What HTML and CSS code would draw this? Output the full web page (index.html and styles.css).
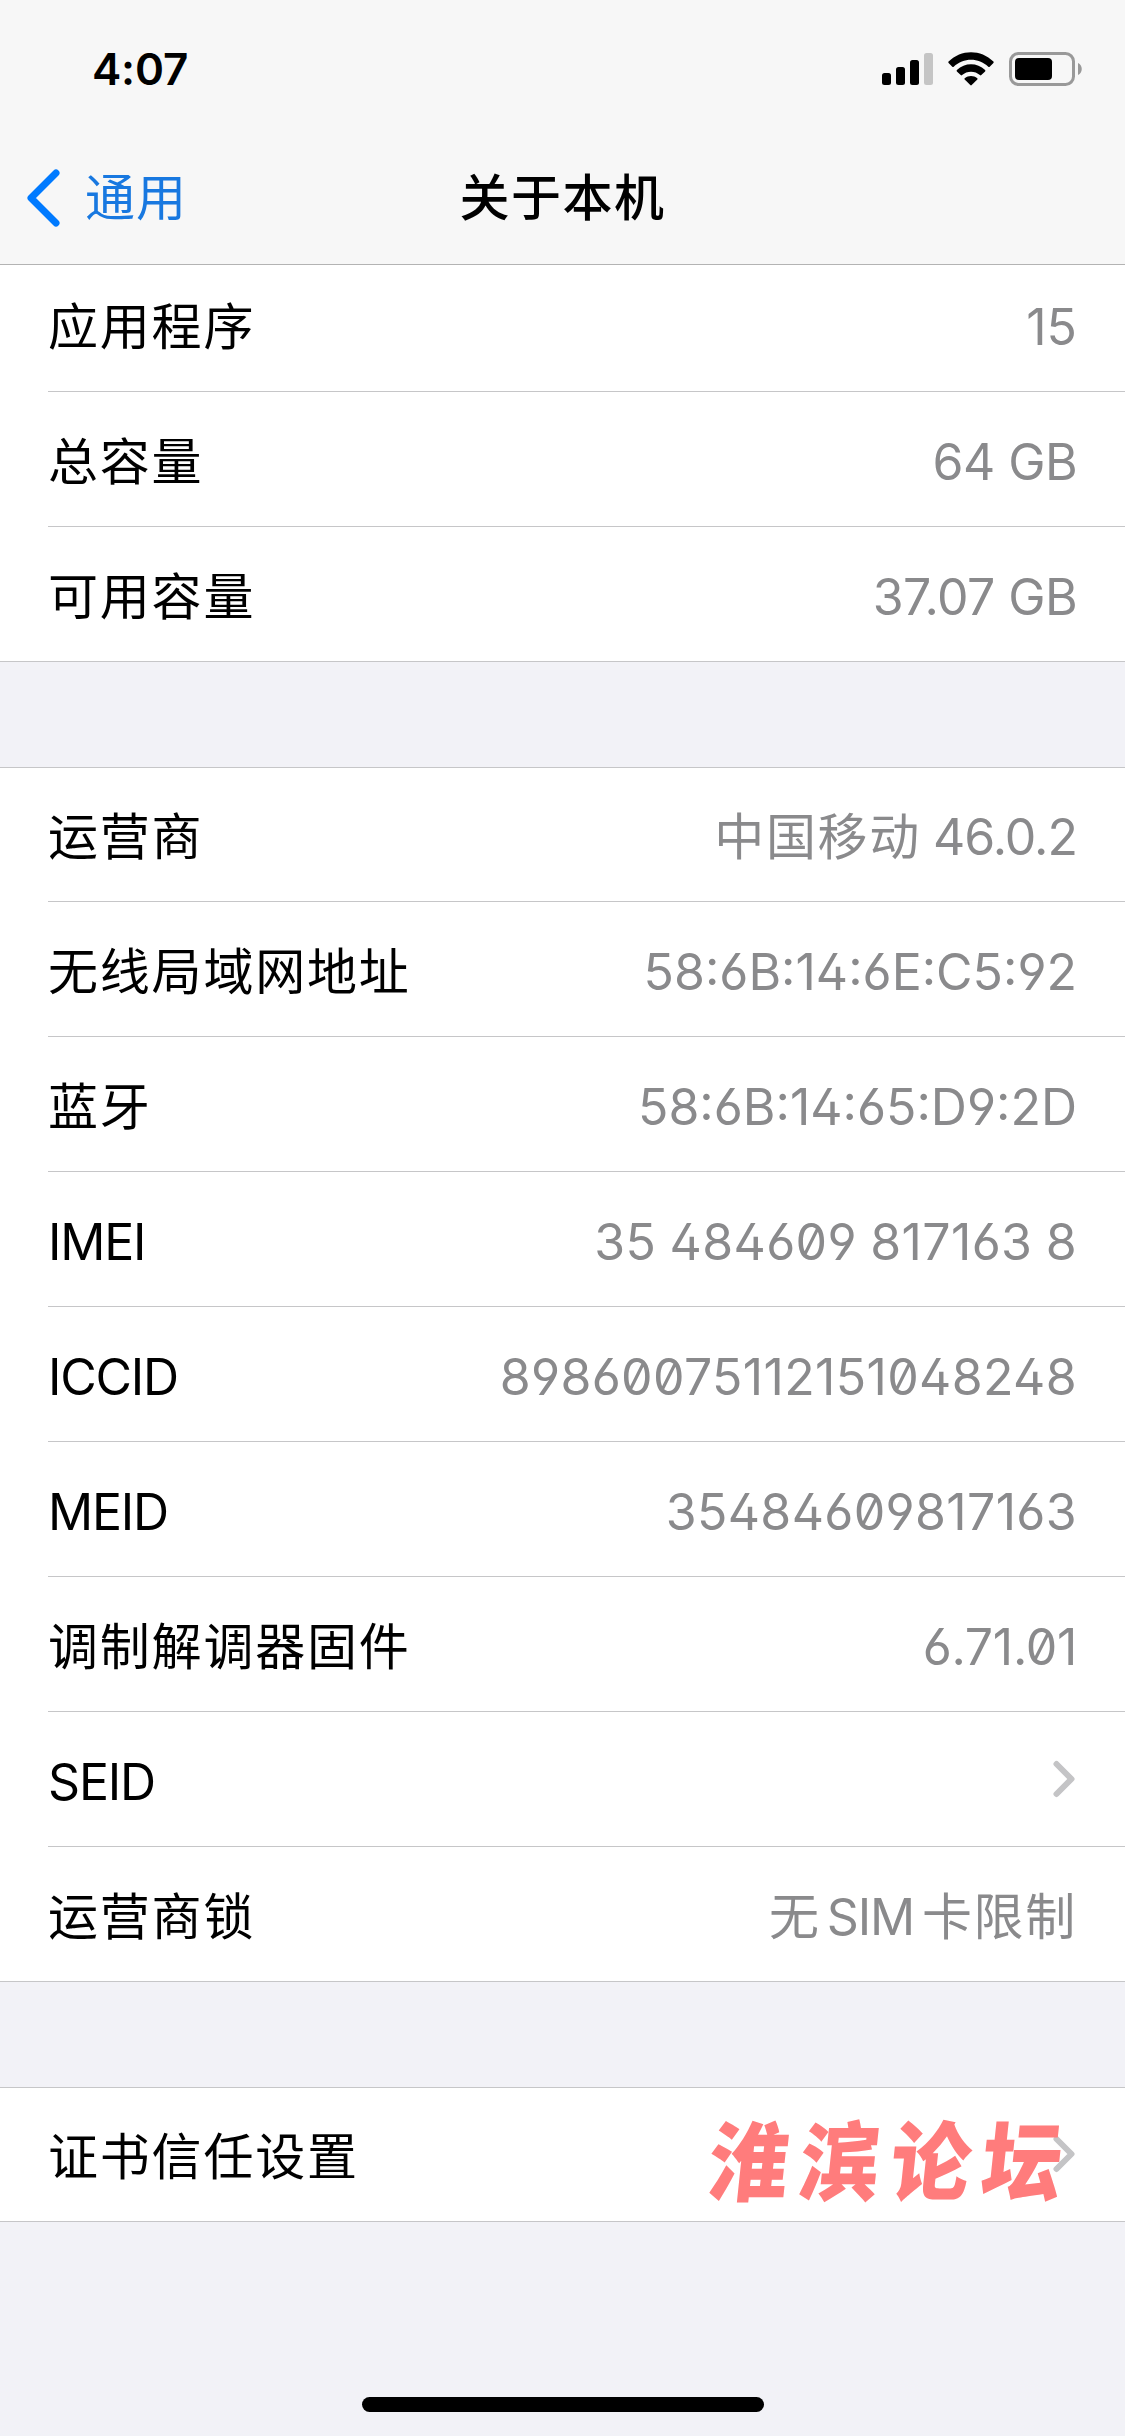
FILE: index.html
```html
<!DOCTYPE html>
<html lang="zh-CN">
<head>
  <meta charset="UTF-8" />
  <title>关于本机</title>
  <link rel="stylesheet" href="styles.css">
</head>
<body>

<header class="header">
  <div class="status-bar">
    <span class="time">4:07</span>
    <div class="status-icons">
      <svg class="signal" width="51" height="34" viewBox="0 0 51 34">
        <rect x="0" y="21" width="9" height="12" rx="2.5" />
        <rect x="14" y="15" width="9" height="18" rx="2.5" />
        <rect x="28" y="8" width="9" height="25" rx="2.5" />
        <rect x="42" y="1" width="9" height="32" rx="2.5" fill="#c5c5c5" />
      </svg>
      <svg class="wifi" width="46" height="34" viewBox="0 0 46 34">
        <path d="M0.6 9.6C13 -2.9 33 -2.9 45.4 9.6Q46 10.3 45.4 11L41.7 14.7Q41 15.3 40.3 14.7C30.5 5.4 15.5 5.4 5.7 14.7Q5 15.3 4.3 14.7L0.6 11Q0 10.3 0.6 9.6Z" />
        <path d="M8.9 18C16.8 10.3 29.2 10.3 37.1 18Q37.7 18.7 37.1 19.4L33.3 23.1Q32.6 23.7 31.9 23.1C27 18.6 19 18.6 14.1 23.1Q13.4 23.7 12.7 23.1L8.9 19.4Q8.3 18.7 8.9 18Z" />
        <path d="M16.7 26.2C20.3 23.2 25.7 23.2 29.3 26.2Q30 26.9 29.3 27.6L23.7 33.1Q23 33.7 22.3 33.1L16.7 27.6Q16 26.9 16.7 26.2Z" />
      </svg>
      <svg class="battery" width="74" height="35" viewBox="0 0 74 35">
        <rect x="1.5" y="1.5" width="63" height="31" rx="8" fill="none" stroke="#999" stroke-width="3" />
        <rect x="6" y="6" width="37" height="22" rx="4" />
        <path d="M69 11C74 13 74 21 69 23Z" fill="#999" />
      </svg>
    </div>
  </div>
  <nav class="nav">
    <div class="back">
      <svg width="34" height="58" viewBox="0 0 34 58"><path d="M30 4L5 29L30 54" fill="none" stroke="#007aff" stroke-width="7" stroke-linecap="round" stroke-linejoin="round" /></svg>
      <span>通用</span>
    </div>
    <h1 class="title">关于本机</h1>
  </nav>
</header>

<main>
  <ul class="group group-first">
    <li class="row"><span>应用程序</span><span class="value">15</span></li>
    <li class="row"><span>总容量</span><span class="value size">64 GB</span></li>
    <li class="row"><span>可用容量</span><span class="value size">37.07 GB</span></li>
  </ul>

  <ul class="group">
    <li class="row"><span>运营商</span><span class="value carrier"><span class="zh">中国移动</span> 46.0.2</span></li>
    <li class="row"><span>无线局域网地址</span><span class="value code mac">58:6B:14:6E:C5:92</span></li>
    <li class="row"><span>蓝牙</span><span class="value code mac">58:6B:14:65:D9:2D</span></li>
    <li class="row"><span class="en">IMEI</span><span class="value code imei">35 484609 817163 8</span></li>
    <li class="row"><span class="en">ICCID</span><span class="value code">89860075112151048248</span></li>
    <li class="row"><span class="en">MEID</span><span class="value code">35484609817163</span></li>
    <li class="row"><span>调制解调器固件</span><span class="value code firmware">6.71.01</span></li>
    <li class="row">
      <span class="en">SEID</span>
      <svg class="chevron" width="22" height="38" viewBox="0 0 22 38"><path d="M3.5 4L18.5 19L3.5 34" /></svg>
    </li>
    <li class="row"><span>运营商锁</span><span class="value"><span class="zh">无</span><span class="sim">SIM</span><span class="zh">卡限制</span></span></li>
  </ul>

  <ul class="group">
    <li class="row">
      <span>证书信任设置</span>
      <svg class="chevron" width="22" height="38" viewBox="0 0 22 38"><path d="M3.5 4L18.5 19L3.5 34" /></svg>
      <span class="watermark">淮滨论坛</span>
    </li>
  </ul>
</main>

<div class="home-indicator"></div>

</body>
</html>
```
FILE: styles.css
```css
* { box-sizing: border-box; }
body {
  margin: 0;
  width: 1125px;
  height: 2436px;
  overflow: hidden;
  display: flex;
  flex-direction: column;
  background-color: #f2f2f7;
  color: #000;
  font-family: Inter, "Noto Sans CJK SC", sans-serif;
  font-size: 50px;
}
svg { display: block; }

/* status bar and navigation */
.header {
  height: 265px;
  flex: none;
  background-color: #f7f7f7;
  border-bottom: 1px solid #b3b3b3;
}
.status-bar {
  height: 132px;
  padding: 0 42px 0 92px;
  display: flex;
  justify-content: space-between;
}
.time {
  margin-top: 40px;
  line-height: 58px;
  font-size: 44px;
  font-weight: 600;
  letter-spacing: -0.2px;
}
.status-icons {
  display: flex;
  margin-top: 52px;
}
.wifi { margin: 0 15px; }
.nav {
  height: 132px;
  padding: 0 26px;
  display: grid;
  grid-template-columns: 1fr auto 1fr;
  align-items: center;
  line-height: 132px;
}
.back {
  display: flex;
  align-items: center;
  gap: 25px;
  color: #1878e0;
  letter-spacing: 1px;
}
.title {
  margin: 0;
  font-size: 50px;
  font-weight: 500;
  letter-spacing: 1.5px;
}

/* settings list */
.group {
  margin: 0 0 105px;
  padding: 0;
  list-style: none;
  background-color: #fff;
  box-shadow: inset 0 1px #c6c6c8;
}
.group-first {
  box-shadow: none;
}
.group-first .row:first-child {
  height: 127px;
  padding-top: 0;
  padding-bottom: 3px;
}
.row {
  position: relative;
  height: 135px;
  padding: 5px 48px 0 48px;
  display: flex;
  justify-content: space-between;
  align-items: center;
  letter-spacing: 1.8px;
  line-height: 60px;
  white-space: nowrap;
}
.row::after {
  content: "";
  position: absolute;
  left: 48px;
  right: 0;
  bottom: 0;
  height: 1px;
  background-color: #c6c6c8;
}
.row:last-child::after { left: 0; }
.en { letter-spacing: -1.2px; }
.value {
  color: #8a8a8c;
  letter-spacing: 0;
}
.size { letter-spacing: -0.6px; }
.carrier { word-spacing: -1px; letter-spacing: -1px; }
.code {
  font-feature-settings: "cv02", "cv03", "cv04", "zero", "case";
  letter-spacing: 0.35px;
}
.mac {
  font-feature-settings: "cv02", "cv03", "cv04", "case";
  letter-spacing: 0;
}
.imei { word-spacing: -1px; }
.firmware { letter-spacing: -0.3px; }
.zh { letter-spacing: 1.7px; }
.sim { margin: 0 8px 0 6px; letter-spacing: -1.2px; }
.chevron {
  margin: -6px 2px 0 0;
}
.chevron path {
  fill: none;
  stroke: #c4c4c6;
  stroke-width: 6;
  stroke-linecap: round;
  stroke-linejoin: round;
}
/* forum stamp laid over the last row */
.watermark {
  position: absolute;
  left: 709px;
  top: 26px;
  font-size: 80px;
  font-weight: 900;
  line-height: 100px;
  letter-spacing: 11px;
  color: #ff7c7c;
  transform: skewX(-6deg) scaleY(1.08);
}

.home-indicator {
  width: 402px;
  height: 15px;
  margin: auto auto 24px;
  border-radius: 8px;
  background-color: #000;
}
```
